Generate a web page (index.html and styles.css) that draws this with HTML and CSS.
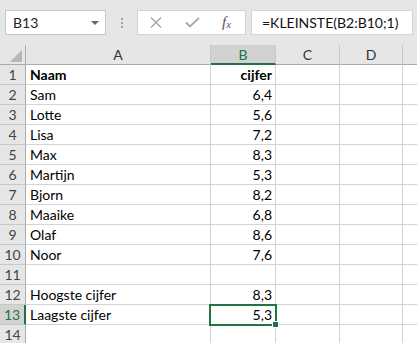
FILE: index.html
```html
<!DOCTYPE html>
<html lang="nl">
<head>
  <meta charset="UTF-8">
  <meta name="viewport" content="width=device-width, initial-scale=1.0">
  <title>Cijfers - KLEINSTE</title>
  <link rel="stylesheet" href="styles.css">
</head>
<body>
  <div class="excel">
    <div class="formula-bar">
      <div class="name-box">
        <span>B13</span>
        <span class="caret"></span>
      </div>
      <div class="grip"><i></i><i></i><i></i></div>
      <div class="fx-box">
        <svg class="icon" width="12" height="11" viewBox="0 0 12 11">
          <path d="M1 0.5 L11 10.5 M11 0.5 L1 10.5" stroke="#a6a6a6" stroke-width="1.4" fill="none"/>
        </svg>
        <svg class="icon" width="15" height="11" viewBox="0 0 15 11">
          <path d="M1 5.5 L5 9.5 L14 0.8" stroke="#a6a6a6" stroke-width="1.8" fill="none"/>
        </svg>
        <span class="fx">f<sub>x</sub></span>
      </div>
      <div class="formula">=KLEINSTE(B2:B10;1)</div>
    </div>

    <div class="sheet">
      <div class="corner"><span class="select-all"></span></div>
      <div class="col-hd">A</div>
      <div class="col-hd active">B</div>
      <div class="col-hd">C</div>
      <div class="col-hd">D</div>
      <div class="col-hd rest"></div>

      <div class="row-hd">1</div><div class="cell bold">Naam</div><div class="cell num bold">cijfer</div><div class="cell"></div><div class="cell"></div><div class="cell rest"></div>
      <div class="row-hd">2</div><div class="cell">Sam</div><div class="cell num">6,4</div><div class="cell"></div><div class="cell"></div><div class="cell rest"></div>
      <div class="row-hd">3</div><div class="cell">Lotte</div><div class="cell num">5,6</div><div class="cell"></div><div class="cell"></div><div class="cell rest"></div>
      <div class="row-hd">4</div><div class="cell">Lisa</div><div class="cell num">7,2</div><div class="cell"></div><div class="cell"></div><div class="cell rest"></div>
      <div class="row-hd">5</div><div class="cell">Max</div><div class="cell num">8,3</div><div class="cell"></div><div class="cell"></div><div class="cell rest"></div>
      <div class="row-hd">6</div><div class="cell">Martijn</div><div class="cell num">5,3</div><div class="cell"></div><div class="cell"></div><div class="cell rest"></div>
      <div class="row-hd">7</div><div class="cell">Bjorn</div><div class="cell num">8,2</div><div class="cell"></div><div class="cell"></div><div class="cell rest"></div>
      <div class="row-hd">8</div><div class="cell">Maaike</div><div class="cell num">6,8</div><div class="cell"></div><div class="cell"></div><div class="cell rest"></div>
      <div class="row-hd">9</div><div class="cell">Olaf</div><div class="cell num">8,6</div><div class="cell"></div><div class="cell"></div><div class="cell rest"></div>
      <div class="row-hd">10</div><div class="cell">Noor</div><div class="cell num">7,6</div><div class="cell"></div><div class="cell"></div><div class="cell rest"></div>
      <div class="row-hd">11</div><div class="cell"></div><div class="cell num"></div><div class="cell"></div><div class="cell"></div><div class="cell rest"></div>
      <div class="row-hd">12</div><div class="cell">Hoogste cijfer</div><div class="cell num">8,3</div><div class="cell"></div><div class="cell"></div><div class="cell rest"></div>
      <div class="row-hd active">13</div><div class="cell">Laagste cijfer</div><div class="cell num selected">5,3</div><div class="cell"></div><div class="cell"></div><div class="cell rest"></div>
      <div class="row-hd">14</div><div class="cell"></div><div class="cell num"></div><div class="cell"></div><div class="cell"></div><div class="cell rest"></div>
    </div>
  </div>
</body>
</html>
```

FILE: styles.css
```css
body {
  margin: 0;
  padding: 0;
  background-color: #ffffff;
  font-family: Lato, "Liberation Sans", Arial, sans-serif;
  color: #000;
  overflow: hidden;
}
.excel {
  width: 417px;
  height: 343px;
  overflow: hidden;
}

/* formulebalk */
.formula-bar {
  height: 45px;
  box-sizing: border-box;
  padding: 10px 4px 10px 5px;
  background-color: #e6e6e6;
  display: flex;
  align-items: stretch;
}
.name-box {
  width: 101px;
  box-sizing: border-box;
  background-color: #fff;
  border: 1px solid #c6c6c6;
  display: flex;
  align-items: center;
  justify-content: space-between;
  padding: 0 6px 0 7px;
  font-size: 14px;
  color: #222;
}
.caret {
  width: 0;
  height: 0;
  border-left: 4px solid transparent;
  border-right: 4px solid transparent;
  border-top: 4px solid #666;
}
.grip {
  width: 31px;
  display: flex;
  flex-direction: column;
  align-items: center;
  justify-content: center;
  gap: 2px;
}
.grip i {
  width: 2px;
  height: 2px;
  background-color: #a0a0a0;
}
.fx-box {
  width: 109px;
  box-sizing: border-box;
  background-color: #fff;
  border: 1px solid #d4d4d4;
  display: flex;
  align-items: center;
  padding-left: 12px;
  gap: 23px;
}
.fx {
  font-family: "Liberation Serif", "Times New Roman", serif;
  font-style: italic;
  font-size: 15px;
  color: #555;
  margin-left: -1px;
}
.fx sub {
  font-size: 11px;
  vertical-align: -1px;
}
.formula {
  flex: 1;
  margin-left: 5px;
  background-color: #fff;
  border: 1px solid #d4d4d4;
  display: flex;
  align-items: center;
  padding-left: 10px;
  font-size: 14px;
  color: #111;
}

/* werkblad */
.sheet {
  display: grid;
  grid-template-columns: 26px 185px 65px 64px 63px 1fr;
  grid-auto-rows: 20px;
  font-size: 14px;
}
.sheet > div {
  box-sizing: border-box;
  border-right: 1px solid #d4d4d4;
  border-bottom: 1px solid #d4d4d4;
}
.corner {
  background-color: #e6e6e6;
  border-right: 1px solid #ababab !important;
  border-bottom: 1px solid #ababab !important;
  position: relative;
}
.select-all {
  position: absolute;
  right: 3px;
  bottom: 2px;
  width: 0;
  height: 0;
  border-left: 12px solid transparent;
  border-bottom: 12px solid #b7b7b7;
}
.col-hd {
  background-color: #e6e6e6;
  border-right-color: #c8c8c8 !important;
  border-bottom: 1px solid #ababab !important;
  text-align: center;
  line-height: 20px;
  color: #333;
}
.col-hd.active {
  background-color: #d2d2d2;
  border-bottom: 2px solid #217346 !important;
  color: #217346;
}
.row-hd {
  background-color: #e6e6e6;
  border-right: 1px solid #ababab !important;
  border-bottom-color: #c8c8c8 !important;
  text-align: center;
  line-height: 20px;
  color: #444;
}
.row-hd.active {
  background-color: #d2d2d2;
  border-right: 2px solid #217346 !important;
  color: #217346;
}
.cell {
  padding: 0 3px 0 4px;
  line-height: 20px;
  white-space: nowrap;
}
.cell.num {
  text-align: right;
}
.cell.bold {
  font-weight: bold;
}
.cell.rest,
.col-hd.rest {
  border-right: none !important;
}
.cell.selected {
  position: relative;
}
.cell.selected::before {
  content: "";
  position: absolute;
  left: -2px;
  top: -1px;
  right: -2px;
  bottom: -2px;
  border: 2px solid #217346;
}
.cell.selected::after {
  content: "";
  position: absolute;
  right: -4px;
  bottom: -4px;
  width: 5px;
  height: 5px;
  background-color: #217346;
  border: 1px solid #fff;
}
```
